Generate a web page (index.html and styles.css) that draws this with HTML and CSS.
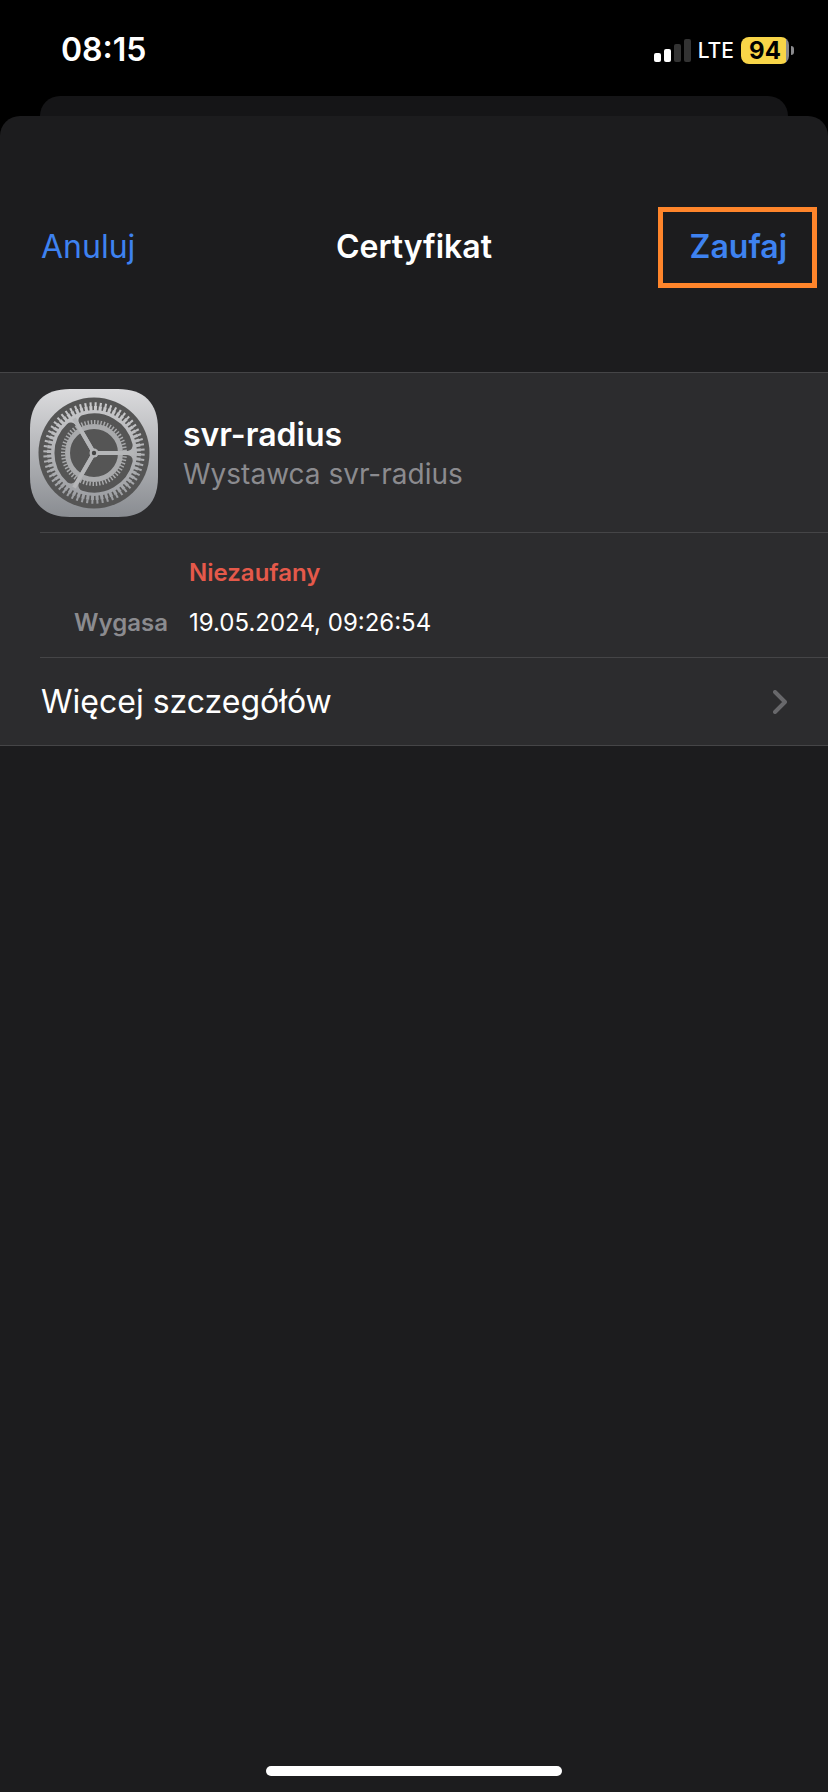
FILE: index.html
```html
<!DOCTYPE html>
<html lang="pl">
<head>
<meta charset="utf-8">
<meta name="viewport" content="width=device-width, initial-scale=1">
<title>Certyfikat</title>
<link rel="stylesheet" href="styles.css">
</head>
<body>
<div class="status">
  <time class="clock">08:15</time>
  <div class="indicators">
    <svg class="signal" viewBox="0 0 37 23" aria-hidden="true">
      <rect x="0" y="14" width="7" height="9" rx="2" fill="#fff"/>
      <rect x="10" y="10" width="7" height="13" rx="2" fill="#fff"/>
      <rect x="20" y="5" width="7" height="18" rx="2" fill="#333"/>
      <rect x="30" y="0" width="7" height="23" rx="2" fill="#333"/>
    </svg>
    <span class="network">LTE</span>
    <span class="battery"><span class="level">94</span><span class="nub"></span></span>
  </div>
</div>
<div class="back-sheet"></div>
<main class="sheet">
  <header class="bar">
    <div class="side"><button class="action cancel" type="button">Anuluj</button></div>
    <h1 class="title">Certyfikat</h1>
    <div class="side side-end"><button class="action trust" type="button">Zaufaj</button></div>
  </header>
  <section class="group">
    <div class="identity">
      <svg class="gear" viewBox="0 0 128 128" aria-hidden="true">
        <defs>
          <linearGradient id="plate" x1="0" y1="0" x2="0" y2="1">
            <stop offset="0" stop-color="#dbdbdd"/>
            <stop offset="1" stop-color="#898c91"/>
          </linearGradient>
          <linearGradient id="metal" gradientUnits="userSpaceOnUse" x1="0" y1="-50" x2="0" y2="50">
            <stop offset="0" stop-color="#c9c9cb"/>
            <stop offset="1" stop-color="#9b9da1"/>
          </linearGradient>
          <path id="gap" d="M4.3 7.5L33.2 7.5A34 34 0 0 1 -10.1 32.5Z" fill="#555" stroke="#555" stroke-width="11" stroke-linejoin="round"/>
        </defs>
        <path d="M40 0H88C114 0 128 14 128 40V88C128 114 114 128 88 128H40C14 128 0 114 0 88V40C0 14 14 0 40 0Z" fill="url(#plate)"/>
        <g transform="translate(64 64)" fill="none" stroke="url(#metal)">
          <circle r="55.5" fill="#555" stroke="none"/>
          <circle r="44.5" stroke-width="5" pathLength="120" stroke-dasharray="1.3 .7"/>
          <circle r="48.7" stroke-width="4" pathLength="120" stroke-dasharray=".8 1.2" stroke-dashoffset="-.25"/>
          <circle r="43" fill="url(#metal)" stroke="none"/>
          <use href="#gap"/>
          <use href="#gap" transform="rotate(120)"/>
          <use href="#gap" transform="rotate(240)"/>
          <g stroke="#a9aaac">
            <circle r="26.5" stroke-width="5"/>
            <circle r="30.8" stroke-width="4.4" pathLength="120" stroke-dasharray=".9 1.1"/>
          </g>
          <path d="M0 0H40M0 0L-20 34.6M0 0L-20 -34.6" stroke="#b5b6b8" stroke-width="4"/>
          <circle r="4.5" fill="#b5b6b8" stroke="none"/>
          <circle r="2.2" fill="#444" stroke="none"/>
        </g>
      </svg>
      <div class="names">
        <h2 class="name">svr-radius</h2>
        <p class="issuer">Wystawca svr-radius</p>
      </div>
    </div>
    <dl class="facts">
      <dt class="label"></dt><dd class="value untrusted">Niezaufany</dd>
      <dt class="label">Wygasa</dt><dd class="value">19.05.2024, 09:26:54</dd>
    </dl>
    <button class="more" type="button">
      <span>Więcej szczegółów</span>
      <svg class="chevron" viewBox="0 0 14 24" aria-hidden="true"><path d="M2 2L12 12L2 22" fill="none" stroke="#68686b" stroke-width="4" stroke-linecap="round" stroke-linejoin="round"/></svg>
    </button>
  </section>
  <div class="home"></div>
</main>
</body>
</html>
```
FILE: styles.css
```css
* { box-sizing: border-box; }
body {
  margin: 0;
  min-height: 100vh;
  display: flex;
  flex-direction: column;
  background: #000;
  color: #fff;
  font-family: Inter, "Liberation Sans", sans-serif;
}
button {
  margin: 0;
  border: 0;
  background: none;
  font: inherit;
  color: inherit;
  cursor: pointer;
}
h1, h2, p, dl, dd { margin: 0; }
.status {
  height: 96px;
  padding: 4px 34px 0 61px;
  display: flex;
  align-items: center;
  justify-content: space-between;
}
.clock { font-size: 32px; line-height: 40px; font-weight: 600; }
.indicators { display: flex; align-items: center; gap: 7px; }
.signal { width: 37px; height: 23px; }
.network { font-size: 21px; line-height: 28px; font-weight: 500; padding-top: 2px; }
.battery { display: flex; align-items: center; gap: 2px; }
.level {
  width: 48px;
  height: 27px;
  border-radius: 8px;
  background: linear-gradient(to right, #f8d548 45px, #8a8a8d 45px);
  color: #000;
  font-size: 24px;
  line-height: 27px;
  font-weight: 700;
  text-align: center;
}
.nub { width: 3px; height: 9px; border-radius: 0 4px 4px 0; background: #8a8a8d; }
.back-sheet { height: 20px; margin: 0 40px; border-radius: 20px 20px 0 0; background: #151517; }
.sheet {
  flex: 1;
  display: flex;
  flex-direction: column;
  border-radius: 20px 20px 0 0;
  background: #1c1c1e;
}
.bar {
  height: 256px;
  padding: 6px 11px 0;
  display: grid;
  grid-template-columns: 1fr auto 1fr;
  align-items: center;
}
.side { display: flex; }
.side-end { justify-content: flex-end; }
.title { font-size: 32px; line-height: 40px; font-weight: 600; }
.action { font-size: 32px; line-height: 40px; color: #3e82f0; }
.cancel { padding: 0 0 0 30px; }
.trust { padding: 15px 25px 16px 27px; border: 5px solid #ff852b; font-weight: 600; }
.group { background: #2c2c2e; border-top: 1px solid #454547; border-bottom: 1px solid #454547; }
.identity { display: flex; align-items: center; gap: 25px; padding: 16px 30px 15px; }
.gear { width: 128px; height: 128px; flex: none; }
.names { padding-top: 2px; }
.name { font-size: 32px; line-height: 40px; font-weight: 600; }
.issuer { font-size: 28px; line-height: 38px; color: #8b8b8f; }
.facts {
  margin-left: 40px;
  padding: 15px 0 9px;
  border-top: 1px solid #454547;
  border-bottom: 1px solid #454547;
  display: grid;
  grid-template-columns: 128px 1fr;
  column-gap: 21px;
  font-size: 24px;
  line-height: 50px;
}
.label { text-align: right; font-weight: 600; color: #8b8b8f; }
.untrusted { font-weight: 600; color: #e5594a; }
.more {
  width: 100%;
  padding: 24px 41px 23px;
  display: flex;
  align-items: center;
  justify-content: space-between;
  font-size: 32px;
  line-height: 40px;
}
.chevron { width: 14px; height: 24px; }
.home {
  width: 296px;
  height: 10px;
  margin: auto auto 16px;
  border-radius: 5px;
  background: #fff;
}
```
